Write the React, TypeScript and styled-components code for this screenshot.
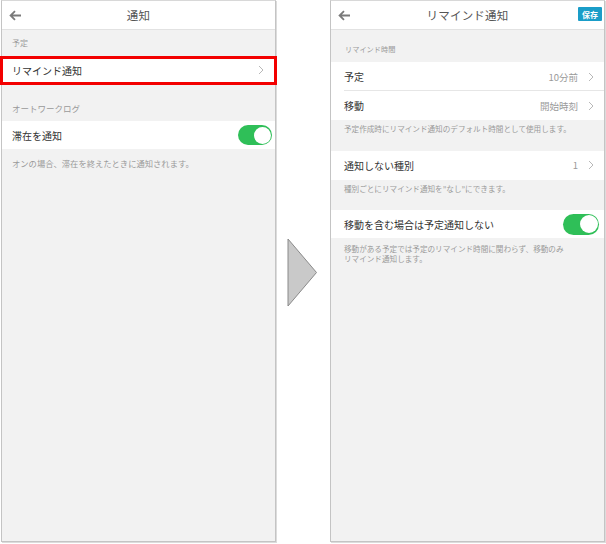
import React from "react";
import styled, { createGlobalStyle } from "styled-components";

const Global = createGlobalStyle`
  html, body { margin: 0; padding: 0; background: #fff; }
  body { font-family: "Noto Sans CJK JP", "Noto Sans", sans-serif; }
  * { box-sizing: border-box; }
`;

const Page = styled.div`
  width: 606px;
  height: 544px;
  display: flex;
  align-items: center;
  padding-left: 1px;
`;

const Phone = styled.div<{ $w: number }>`
  width: ${(p) => p.$w}px;
  height: 542px;
  align-self: flex-start;
  background: #f2f2f2;
  border: 1px solid #c4c4c4;
  border-top-color: #d8d8d8;
  box-shadow: 1px 1px 0 #dcdcdc;
  display: flex;
  flex-direction: column;
`;

const Header = styled.div`
  height: 29px;
  flex: none;
  background: #fff;
  border-bottom: 1px solid #e2e2e2;
  display: grid;
  grid-template-columns: 40px 1fr 40px;
  align-items: center;
`;

const Back = styled.div`
  padding-left: 7px;
  display: flex;
  align-items: center;
`;

const Title = styled.div<{ $size: number }>`
  text-align: center;
  font-size: ${(p) => p.$size}px;
  color: #555;
  letter-spacing: 0.2px;
`;

const HeaderRight = styled.div`
  display: flex;
  justify-content: flex-end;
  padding-right: 2px;
`;

const SaveButton = styled.div`
  width: 24px;
  height: 14px;
  background: #1a9dc8;
  color: #fff;
  font-size: 8px;
  font-weight: 700;
  display: flex;
  align-items: center;
  justify-content: center;
  border-radius: 1px;
  margin-top: -2px;
`;

const SectionLabel = styled.div<{ $top: number; $pad: number; $side: number; $h: number; $size: number }>`
  margin-top: ${(p) => p.$top}px;
  padding: ${(p) => p.$pad}px ${(p) => p.$side}px 0;
  height: ${(p) => p.$h}px;
  flex: none;
  font-size: ${(p) => p.$size}px;
  line-height: 12px;
  color: #9a9a9a;
`;

const Group = styled.div<{ $top?: number }>`
  margin-top: ${(p) => p.$top ?? 0}px;
  background: #fff;
  flex: none;
`;

const Row = styled.div<{ $h: number; $pad: number; $right: number; $highlight?: boolean; $divider?: boolean }>`
  position: relative;
  height: ${(p) => p.$h}px;
  display: flex;
  align-items: center;
  padding: 0 ${(p) => p.$right}px 0 ${(p) => p.$pad}px;
  font-size: 10px;
  color: #333;
  ${(p) =>
    p.$divider
      ? `&::after { content: ""; position: absolute; left: ${p.$pad}px; right: 0; bottom: 0; height: 1px; background: #e6e6e6; }`
      : ""}
  ${(p) =>
    p.$highlight
      ? `&::before { content: ""; position: absolute; left: -2px; right: -2px; top: 0; bottom: -1px; border: 3px solid #f30000; }`
      : ""}
`;

const Label = styled.div`
  flex: 1;
`;

const Value = styled.div`
  color: #9a9a9a;
  font-size: 9.5px;
  margin-right: 10px;
`;

const Note = styled.div<{ $size: number; $pad: number; $top?: number }>`
  padding: ${(p) => p.$top ?? 4}px ${(p) => p.$pad}px 5px;
  font-size: ${(p) => p.$size}px;
  line-height: 9.5px;
  color: #9a9a9a;
`;

const Toggle = styled.div<{ $w: number; $h: number; $pull: number }>`
  width: ${(p) => p.$w}px;
  height: ${(p) => p.$h}px;
  border-radius: ${(p) => p.$h / 2}px;
  background: #2fbf58;
  position: relative;
  margin-right: -${(p) => p.$pull}px;
  &::after {
    content: "";
    position: absolute;
    right: 1.5px;
    top: 1.5px;
    width: ${(p) => p.$h - 3}px;
    height: ${(p) => p.$h - 3}px;
    border-radius: 50%;
    background: #fff;
  }
`;

const ArrowCol = styled.div`
  width: 54px;
  display: flex;
  justify-content: center;
  padding-right: 1px;
`;

const Chevron = () => (
  <svg width="6" height="10" viewBox="0 0 6 10">
    <polyline points="1,1 5,5 1,9" fill="none" stroke="#b8b8b8" strokeWidth="1" />
  </svg>
);

const BackArrow = () => (
  <svg width="13" height="11" viewBox="0 0 13 11">
    <path d="M12 5.5H2 M6 1.2L1.6 5.5L6 9.8" fill="none" stroke="#7a7a7a" strokeWidth="1.8" />
  </svg>
);

export default function App() {
  return (
    <>
      <Global />
      <Page>
        <Phone $w={275}>
          <Header>
            <Back>
              <BackArrow />
            </Back>
            <Title $size={11.5}>通知</Title>
            <div />
          </Header>
          <SectionLabel $top={0} $pad={7} $side={10} $h={26} $size={8}>予定</SectionLabel>
          <Group>
            <Row $h={28} $pad={10} $right={11} $highlight>
              <Label>リマインド通知</Label>
              <Chevron />
            </Row>
          </Group>
          <SectionLabel $top={11} $pad={7} $side={10} $h={26} $size={8.5}>オートワークログ</SectionLabel>
          <Group>
            <Row $h={28} $pad={10} $right={11}>
              <Label>滞在を通知</Label>
              <Toggle $w={34} $h={20} $pull={8} />
            </Row>
          </Group>
          <Note $size={8.3} $pad={10} $top={10}>
            オンの場合、滞在を終えたときに通知されます。
          </Note>
        </Phone>
        <ArrowCol>
          <svg width="31" height="69" viewBox="0 0 31 69">
            <polygon points="1,1 29.5,34.5 1,68" fill="#c9c9c9" stroke="#8a8a8a" strokeWidth="1" />
          </svg>
        </ArrowCol>
        <Phone $w={275}>
          <Header>
            <Back>
              <BackArrow />
            </Back>
            <Title $size={11.5}>リマインド通知</Title>
            <HeaderRight>
              <SaveButton>保存</SaveButton>
            </HeaderRight>
          </Header>
          <SectionLabel $top={0} $pad={13} $side={14} $h={32} $size={7.2}>リマインド時間</SectionLabel>
          <Group>
            <Row $h={29} $pad={13} $right={10} $divider>
              <Label>予定</Label>
              <Value>10分前</Value>
              <Chevron />
            </Row>
            <Row $h={29} $pad={13} $right={10}>
              <Label>移動</Label>
              <Value>開始時刻</Value>
              <Chevron />
            </Row>
          </Group>
          <Note $size={7.6} $pad={13}>
            予定作成時にリマインド通知のデフォルト時間として使用します。
          </Note>
          <Group $top={12}>
            <Row $h={29} $pad={13} $right={10}>
              <Label>通知しない種別</Label>
              <Value>1</Value>
              <Chevron />
            </Row>
          </Group>
          <Note $size={7.6} $pad={13}>
            種別ごとにリマインド通知を”なし”にできます。
          </Note>
          <Group $top={12}>
            <Row $h={28} $pad={13} $right={10}>
              <Label>移動を含む場合は予定通知しない</Label>
              <Toggle $w={36} $h={21} $pull={5} />
            </Row>
          </Group>
          <Note $size={7.6} $pad={13} $top={6}>
            移動がある予定では予定のリマインド時間に関わらず、移動のみ
            <br />
            リマインド通知します。
          </Note>
        </Phone>
      </Page>
    </>
  );
}
